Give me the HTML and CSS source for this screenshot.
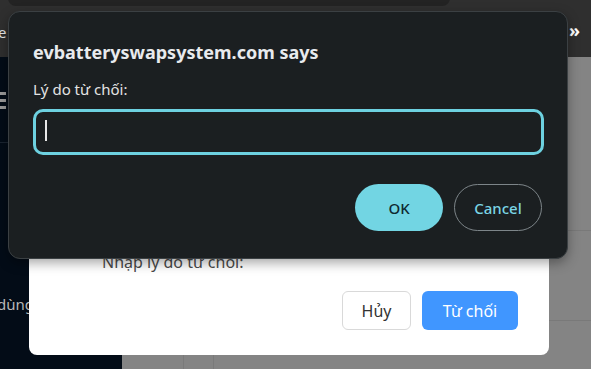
FILE: index.html
```html
<!DOCTYPE html>
<html lang="vi">
<head>
<meta charset="utf-8">
<link rel="stylesheet" href="styles.css">
</head>
<body>
<div class="page">
  <header class="topbar">
    <div class="address"></div>
    <span class="topbar-text">e</span>
    <span class="more">»</span>
  </header>
  <div class="main">
    <aside class="sidebar">
      <div class="burger"><span></span><span></span><span></span></div>
      <div class="side-sep"></div>
      <div class="side-item">dùng</div>
    </aside>
    <section class="content">
      <div class="col-line c1"></div>
      <div class="col-line c2"></div>
      <div class="row-line r1"></div>
      <div class="row-line r2"></div>
    </section>
  </div>

  <div class="modal">
    <p class="modal-label">Nhập lý do từ chối:</p>
    <div class="modal-actions">
      <button class="btn-default">Hủy</button>
      <button class="btn-primary">Từ chối</button>
    </div>
  </div>

  <div class="prompt">
    <h1 class="prompt-title">evbatteryswapsystem.com says</h1>
    <p class="prompt-msg">Lý do từ chối:</p>
    <div class="prompt-input"><span class="caret"></span></div>
    <div class="prompt-actions">
      <button class="btn-ok">OK</button>
      <button class="btn-cancel">Cancel</button>
    </div>
  </div>
</div>
</body>
</html>
```
FILE: styles.css
```css
* { box-sizing: border-box; margin: 0; padding: 0; }
html, body { width: 591px; height: 369px; overflow: hidden; }
body { font-family: "Noto Sans", "Open Sans", sans-serif; background: #2f2f2f; }

.page { position: relative; width: 591px; height: 369px; display: flex; flex-direction: column; }

.topbar { height: 57px; background: #2f2f2f; position: relative; flex-shrink: 0; }
.address { position: absolute; left: 8px; top: -20px; width: 442px; height: 26px; background: #232323; border-radius: 8px; }
.topbar-text { position: absolute; left: -2px; top: 22px; color: #e6e6e6; font-size: 15px; }
.more { position: absolute; left: 569px; top: 20px; color: #ffffff; font-size: 18px; font-weight: bold; line-height: 20px; }

.main { flex: 1; display: flex; }
.sidebar { width: 122px; background: #030c17; position: relative; }
.burger { position: absolute; left: -6px; top: 35px; display: flex; flex-direction: column; gap: 4px; }
.burger span { display: block; width: 12px; height: 3px; background: #9a9a9a; }
.side-sep { position: absolute; left: 0; top: 85px; width: 8px; height: 1px; background: #1a2430; }
.side-item { position: absolute; left: -3px; top: 237px; color: #b8b8b8; font-size: 15px; }

.content { flex: 1; background: #848484; position: relative; }
.col-line { position: absolute; top: 0; bottom: 0; width: 1px; background: #7a7a7a; }
.c1 { left: 61px; }
.c2 { left: 91px; }
.row-line { position: absolute; left: 0; right: 0; height: 1px; background: #797979; }
.r1 { top: 173px; }
.r2 { top: 263px; }

.modal {
  position: absolute; left: 29px; top: 150px; width: 520px; height: 205px;
  background: #ffffff; border-radius: 8px;
  display: flex; flex-direction: column; justify-content: flex-end;
  padding: 0 31px 25px 73px;
}
.modal-label { color: #4a4a4a; font-size: 16px; line-height: 22px; margin-bottom: 18px; }
.modal-actions { display: flex; justify-content: flex-end; gap: 11px; }
.modal-actions button { font-family: inherit; font-size: 16px; height: 39px; border-radius: 6px; cursor: pointer; }
.btn-default { width: 69px; background: #fff; border: 1px solid #d9d9d9; color: #333; font-size: 17px; }
.btn-primary { width: 96px; background: #4096ff; border: none; color: #fff; }

.prompt {
  position: absolute; left: 8px; top: 11px; width: 560px; height: 248px;
  background: #1b1f21; border: 1px solid #3b4043; border-radius: 12px;
  box-shadow: 0 4px 12px rgba(0,0,0,0.35);
  padding: 28px 23px 0 24px;
  display: flex; flex-direction: column;
}
.prompt-title { color: #e8eaed; font-size: 18px; font-weight: bold; line-height: 25px; }
.prompt-msg { color: #e3e3e3; font-size: 15px; line-height: 20px; margin-top: 14px; }
.prompt-input {
  margin-top: 10px; height: 46px; border: 3px solid #6dd1e0; border-radius: 10px;
  position: relative;
}
.caret { position: absolute; left: 9px; top: 8px; width: 2px; height: 21px; background: #e8e8e8; }
.prompt-actions { display: flex; justify-content: flex-end; gap: 11px; margin-top: 29px; padding-right: 2px; }
.prompt-actions button { font-family: inherit; font-size: 15px; font-weight: 500; width: 88px; height: 47px; border-radius: 24px; cursor: pointer; }
.btn-ok { background: #72d5e3; color: #0f2a30; border: none; }
.btn-cancel { background: transparent; color: #7ad4e4; border: 1px solid #7d8589; }
```
